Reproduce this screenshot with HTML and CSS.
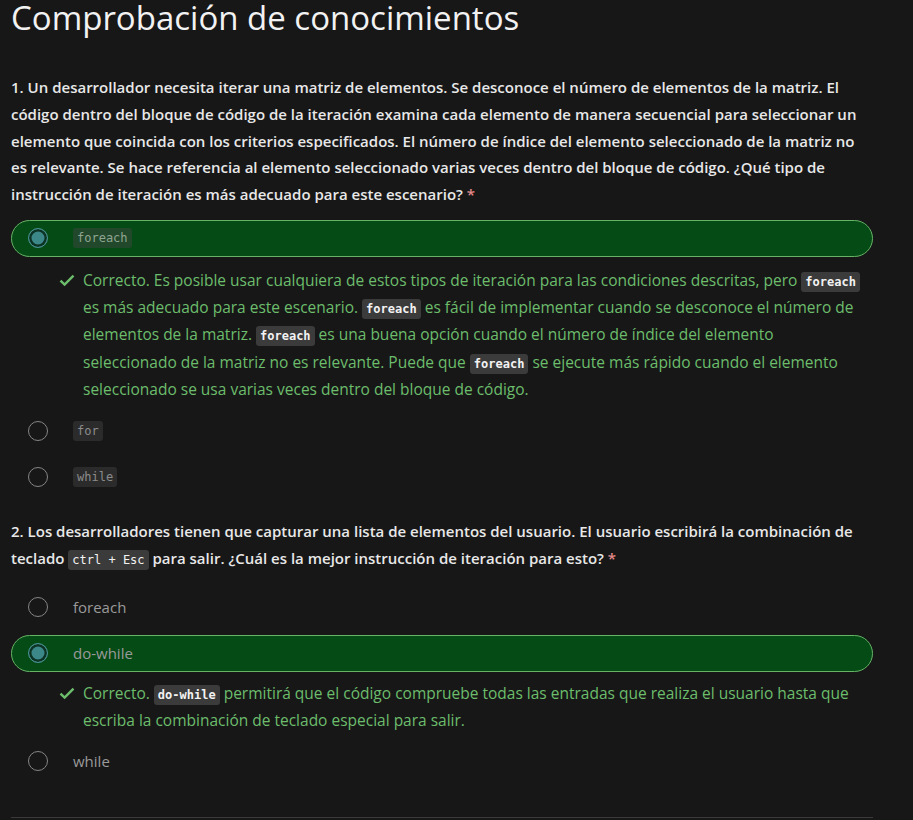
FILE: index.html
```html
<!DOCTYPE html>
<html lang="es">
<head>
<meta charset="utf-8">
<title>Comprobación de conocimientos</title>
<link rel="stylesheet" href="styles.css">
</head>
<body>
<main class="page">
  <h1 class="title">Comprobación de conocimientos</h1>

  <section class="question">
    <p class="q-text">1. Un desarrollador necesita iterar una matriz de elementos. Se desconoce el número de elementos de la matriz. El código dentro del bloque de código de la iteración examina cada elemento de manera secuencial para seleccionar un elemento que coincida con los criterios especificados. El número de índice del elemento seleccionado de la matriz no es relevante. Se hace referencia al elemento seleccionado varias veces dentro del bloque de código. ¿Qué tipo de instrucción de iteración es más adecuado para este escenario? <span class="req">*</span></p>
    <div class="options">
      <div class="option selected">
        <span class="radio checked"></span>
        <code class="opt-code">foreach</code>
      </div>
      <div class="feedback">
        <svg class="check" viewBox="0 0 16 16" width="16" height="16"><path d="M1.5 8.6 L5.6 12.6 L14.5 3.6" fill="none" stroke="currentColor" stroke-width="2.4" stroke-linejoin="miter"/></svg>
        <p class="fb-text">Correcto. Es posible usar cualquiera de estos tipos de iteración para las condiciones descritas, pero <code class="fb-code">foreach</code> es más adecuado para este escenario. <code class="fb-code">foreach</code> es fácil de implementar cuando se desconoce el número de elementos de la matriz. <code class="fb-code">foreach</code> es una buena opción cuando el número de índice del elemento seleccionado de la matriz no es relevante. Puede que <code class="fb-code">foreach</code> se ejecute más rápido cuando el elemento seleccionado se usa varias veces dentro del bloque de código.</p>
      </div>
      <div class="option">
        <span class="radio"></span>
        <code class="opt-code">for</code>
      </div>
      <div class="option">
        <span class="radio"></span>
        <code class="opt-code">while</code>
      </div>
    </div>
  </section>

  <section class="question q2">
    <p class="q-text">2. Los desarrolladores tienen que capturar una lista de elementos del usuario. El usuario escribirá la combinación de teclado <code class="q-code">ctrl + Esc</code> para salir. ¿Cuál es la mejor instrucción de iteración para esto? <span class="req">*</span></p>
    <div class="options">
      <div class="option">
        <span class="radio"></span>
        <span class="opt-label">foreach</span>
      </div>
      <div class="option selected">
        <span class="radio checked"></span>
        <span class="opt-label">do-while</span>
      </div>
      <div class="feedback">
        <svg class="check" viewBox="0 0 16 16" width="16" height="16"><path d="M1.5 8.6 L5.6 12.6 L14.5 3.6" fill="none" stroke="currentColor" stroke-width="2.4" stroke-linejoin="miter"/></svg>
        <p class="fb-text">Correcto. <code class="fb-code">do-while</code> permitirá que el código compruebe todas las entradas que realiza el usuario hasta que escriba la combinación de teclado especial para salir.</p>
      </div>
      <div class="option">
        <span class="radio"></span>
        <span class="opt-label">while</span>
      </div>
    </div>
  </section>

  <hr class="divider">
</main>
</body>
</html>
```

FILE: styles.css
```css
html, body {
  margin: 0;
  padding: 0;
  background: #171717;
}

body {
  font-family: "Open Sans", "Noto Sans", sans-serif;
  color: #e6e6e6;
}

.page {
  width: 862px;
  padding: 0 0 0 11px;
}

.title {
  margin: 0;
  font-size: 33px;
  font-weight: 400;
  line-height: 36px;
  color: #f2f2f2;
  height: 36px;
}

.question {
  margin-top: 38px;
}

.q2 {
  margin-top: 23px;
}

.q-text {
  margin: 0;
  font-size: 15px;
  font-weight: 600;
  line-height: 26.75px;
  color: #e8e8e8;
}

.req {
  color: #e48a8a;
}

.options {
  display: flex;
  flex-direction: column;
  gap: 9px;
  margin-top: 12px;
}

.q2 .options {
  margin-top: 17px;
}

.option {
  display: flex;
  align-items: center;
  height: 37px;
  box-sizing: border-box;
  padding-left: 16px;
  border: 1px solid transparent;
  border-radius: 19px;
}

.option.selected {
  background: #054b16;
  border-color: #66b366;
}

.radio {
  width: 20px;
  height: 20px;
  box-sizing: border-box;
  border-radius: 50%;
  border: 1.5px solid #858585;
  flex: none;
  margin-right: 25px;
}

.radio.checked {
  border: 1.5px solid #4a9090;
  background: #3c8888;
  box-shadow: inset 0 0 0 2.5px #0c3324;
}

.opt-code {
  font-family: "DejaVu Sans Mono", "Liberation Mono", monospace;
  font-size: 12px;
  line-height: 18px;
  padding: 1px 4px;
  border-radius: 3px;
  background: #2b2b2b;
  color: #8c8c8c;
}

.selected .opt-code {
  background: #22482b;
  color: #8fa592;
}

.opt-label {
  font-size: 15px;
  color: #9a9a9a;
}

.feedback {
  display: flex;
  align-items: flex-start;
  margin: 0;
  padding: 1px 11px 0 48px;
  color: #6cbd6c;
}

.q2 .feedback {
  margin: -0.5px 0 -1.5px 0;
  padding-top: 0;
}

.check {
  flex: none;
  margin-top: 5px;
  margin-right: 8px;
  color: #6cbd6c;
}

.fb-text {
  margin: 0;
  font-size: 15.5px;
  line-height: 27.25px;
  color: #6cbd6c;
}

.fb-code,
.q-code {
  font-family: "DejaVu Sans Mono", "Liberation Mono", monospace;
  font-size: 12px;
  line-height: 1;
  font-weight: 700;
  padding: 3px 4px;
  border-radius: 3px;
  background: #3b3b3b;
  color: #f2f2f2;
}

.q-code {
  font-weight: 400;
}

.divider {
  margin: 38px 0 0 0;
  border: 0;
  border-top: 1px solid #3a3a3a;
  height: 0;
}
```
